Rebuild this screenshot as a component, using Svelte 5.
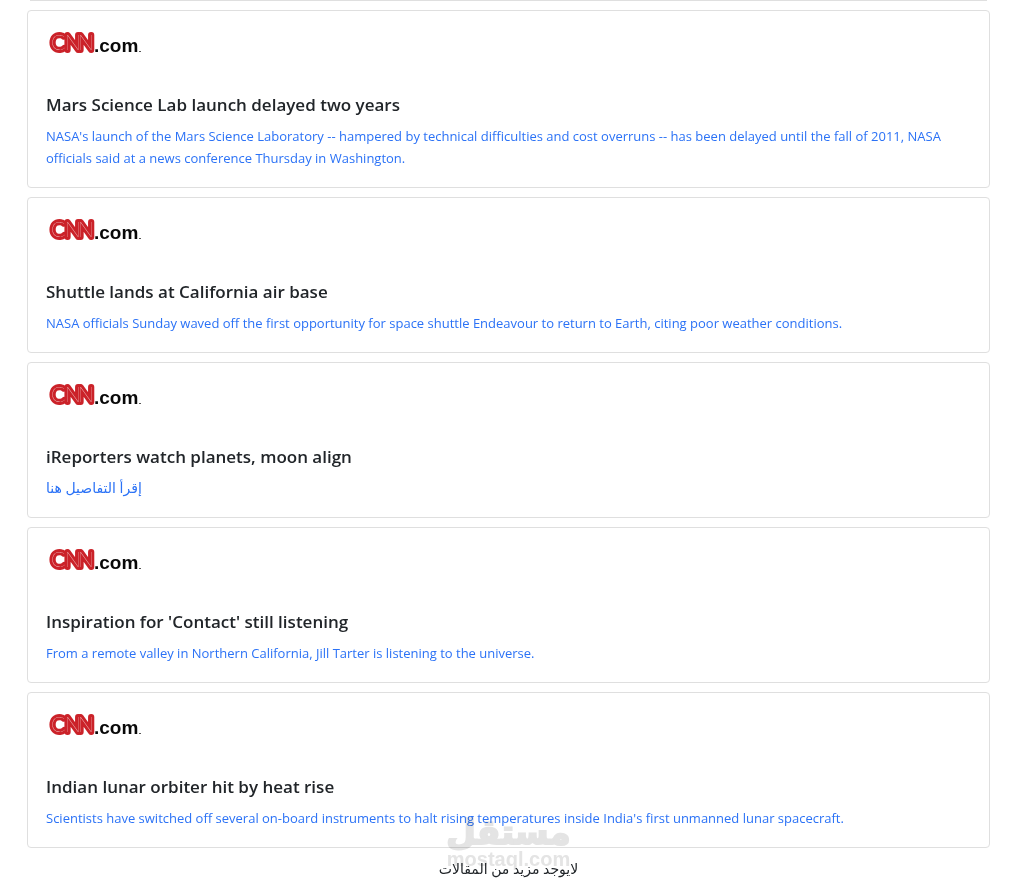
<script>
  const articles = [
    {
      title: 'Mars Science Lab launch delayed two years',
      text: "NASA's launch of the Mars Science Laboratory -- hampered by technical difficulties and cost overruns -- has been delayed until the fall of 2011, NASA officials said at a news conference Thursday in Washington."
    },
    {
      title: 'Shuttle lands at California air base',
      text: 'NASA officials Sunday waved off the first opportunity for space shuttle Endeavour to return to Earth, citing poor weather conditions.'
    },
    {
      title: 'iReporters watch planets, moon align',
      text: 'إقرأ التفاصيل هنا',
      lang: 'ar'
    },
    {
      title: "Inspiration for 'Contact' still listening",
      text: 'From a remote valley in Northern California, Jill Tarter is listening to the universe.'
    },
    {
      title: 'Indian lunar orbiter hit by heat rise',
      text: "Scientists have switched off several on-board instruments to halt rising temperatures inside India's first unmanned lunar spacecraft."
    }
  ];
</script>

<main class="feed">
  <div class="card-end"></div>

  {#each articles as article}
    <article class="card">
      <svg class="logo" width="100" height="30" viewBox="0 0 100 30" role="img" aria-label="CNN.com">
        <g class="cnn">
          <text class="cnn-outer" x="5 19 32" y="23">CNN</text>
          <text class="cnn-inner" x="5 19 32" y="23">CNN</text>
        </g>
        <text class="com" x="48" y="25">.com</text>
        <rect x="93" y="24" width="2" height="1" fill="#555" />
      </svg>
      <h2>{article.title}</h2>
      <a href="#article" class:arabic={article.lang === 'ar'}>{article.text}</a>
    </article>
  {/each}

  <footer>
    <p dir="rtl">لايوجد مزيد من المقالات</p>
    <div class="watermark">
      <span class="mark-ar" lang="ar">مستقل</span>
      <span class="mark-en">mostaql.com</span>
    </div>
  </footer>
</main>

<style>
  :global(body) {
    margin: 0;
    background: #fff;
    overflow-x: hidden;
  }

  .feed {
    display: flex;
    flex-direction: column;
    gap: 9px;
    padding: 0 26px 0 27px;
    color: #212529;
    font-family: "Open Sans", "DejaVu Sans", sans-serif;
  }

  .card-end {
    height: 1px;
    margin: 0 3px;
    background: #dfdfdf;
  }

  .card {
    box-sizing: border-box;
    padding: 16px 18px 18px;
    border: 1px solid #dfdfdf;
    border-radius: 4px;
    background: #fff;
  }

  .logo {
    display: block;
    margin-bottom: 37px;
    overflow: visible;
  }

  .cnn {
    font-family: Lato, sans-serif;
    font-size: 21px;
    font-weight: 100;
  }

  .cnn-outer {
    fill: #cb2229;
    stroke: #cb2229;
    stroke-width: 6px;
    stroke-linejoin: round;
  }

  .cnn-inner {
    fill: #fbe4e4;
  }

  .com {
    font-family: "Liberation Sans", Arial, sans-serif;
    font-size: 19px;
    font-weight: 700;
    fill: #080808;
  }

  h2 {
    margin: 0 0 9px;
    font-size: 17px;
    font-weight: 600;
    line-height: 22px;
  }

  a {
    display: block;
    color: #2b72f6;
    font-size: 13px;
    line-height: 22px;
    text-decoration: none;
  }

  .arabic {
    font-size: 14px;
  }

  footer {
    position: relative;
    text-align: center;
  }

  p {
    margin: 0;
    font-size: 14px;
    line-height: 24px;
  }

  .watermark {
    position: absolute;
    bottom: 12px;
    left: 50%;
    display: flex;
    flex-direction: column;
    align-items: center;
    transform: translateX(-50%);
    color: #e4e4e4;
    font-weight: 700;
    mix-blend-mode: multiply;
    pointer-events: none;
  }

  .mark-ar {
    font-family: "DejaVu Sans", sans-serif;
    font-size: 34px;
    line-height: 34px;
    -webkit-text-stroke: 2px #e4e4e4;
  }

  .mark-en {
    font-family: "Liberation Sans", Arial, sans-serif;
    font-size: 20px;
    line-height: 20px;
  }
</style>
